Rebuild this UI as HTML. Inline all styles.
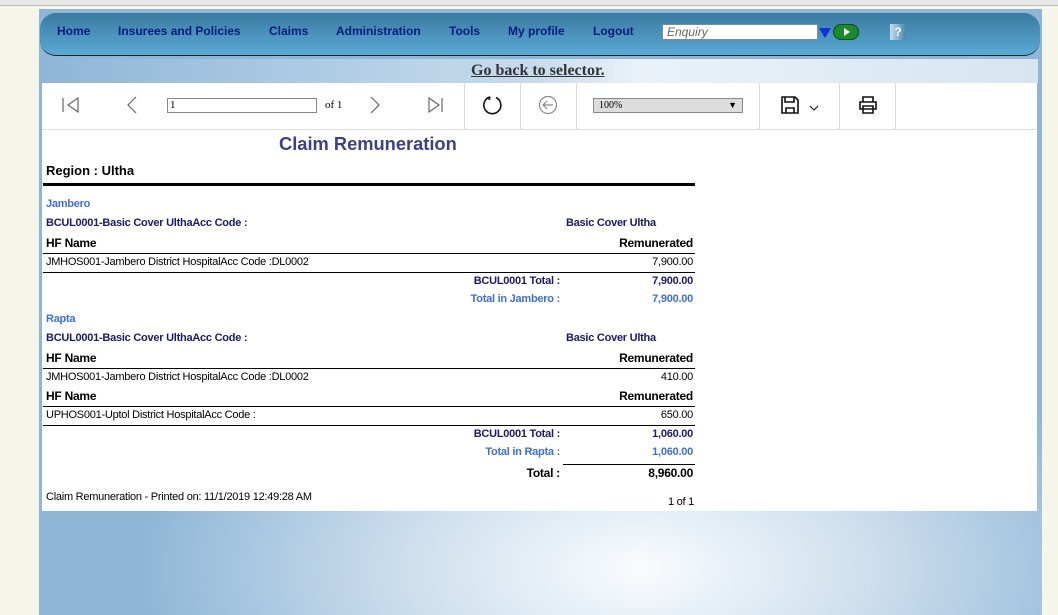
<!DOCTYPE html>
<html><head><meta charset="utf-8"><style>
*{margin:0;padding:0;box-sizing:border-box}
body{width:1058px;height:615px;overflow:hidden;background:#f5f5e9;font-family:"Liberation Sans",sans-serif;position:relative}
.a{position:absolute;white-space:nowrap}
#topbar{left:0;top:0;width:1058px;height:6px;background:#e8e8e8;border-bottom:1px solid #bbb}
#main{left:39px;top:9px;width:1003px;height:606px;background:radial-gradient(ellipse 500px 260px at 600px 560px,#fafcfe 0%,#cfe0ee 45%,#8fb6d6 100%)}
#nav{left:40px;top:13px;width:1000px;height:43px;border-radius:16px;background:linear-gradient(#3a7aa0,#5aaad6);border-bottom:1px solid #222}
.nv{font-size:12px;font-weight:bold;color:#0a1a80;top:24px}
#band{left:40px;top:59px;width:998px;height:24px;background:linear-gradient(90deg,#8fb6d7,#c7dced 50%,#eaf2f8 60%,#d6e5f0)}
#rep{left:42px;top:83px;width:995px;height:428px;background:#fff}
.tb{top:83px;height:46px;border-right:1px solid #ddd}
.t{font-size:11px;color:#000;letter-spacing:-0.25px}
.b{font-weight:bold}
.nb{color:#1a1a6e}
.lb{color:#3b6ee0}
.hl{position:absolute;left:43px;width:652px;height:1px;background:#000}
</style></head><body>
<div class="a" id="topbar"></div>
<div class="a" id="main"></div>
<div class="a" id="nav"></div>
<div class="a nv" style="left:57px">Home</div>
<div class="a nv" style="left:118px">Insurees and Policies</div>
<div class="a nv" style="left:269px">Claims</div>
<div class="a nv" style="left:336px">Administration</div>
<div class="a nv" style="left:449px">Tools</div>
<div class="a nv" style="left:508px">My profile</div>
<div class="a nv" style="left:593px">Logout</div>
<div class="a" style="left:662px;top:24px;width:156px;height:16px;background:#fff;border:1px solid #888;font-size:12px;font-style:italic;color:#666;padding-left:4px;line-height:14px">Enquiry</div>
<div class="a" style="left:819px;top:28px;width:0;height:0;border-left:6px solid transparent;border-right:6px solid transparent;border-top:10px solid #1030e0"></div>
<div class="a" style="left:833px;top:24px;width:26px;height:16px;border-radius:8px;background:#1a8a2a;border:1px solid #0a4a10"><div style="position:absolute;left:10px;top:3px;border-top:4px solid transparent;border-bottom:4px solid transparent;border-left:6px solid #fff"></div></div>
<div class="a" style="left:890px;top:24px;width:16px;height:16px;background:linear-gradient(90deg,#cde,#48a);color:#fff;font-size:12px;font-weight:bold;text-align:center;line-height:16px">?</div>
<div class="a" id="band"></div>
<div class="a" style="left:471px;top:62px;font-family:'Liberation Serif',serif;font-size:16px;font-weight:bold;color:#333;text-decoration:underline">Go back to selector.</div>
<div class="a" id="rep"></div>
<div class="a" style="left:42px;top:129px;width:995px;height:1px;background:#ddd"></div>
<div class="a tb" style="left:42px;width:423px"></div>
<div class="a tb" style="left:465px;width:56px"></div>
<div class="a tb" style="left:521px;width:56px"></div>
<div class="a tb" style="left:577px;width:183px"></div>
<div class="a tb" style="left:760px;width:80px"></div>
<div class="a tb" style="left:840px;width:56px"></div>
<svg class="a" style="left:60px;top:95px" width="400" height="20" fill="none" stroke="#666" stroke-width="1.2">
<path d="M3 3v14M18 3l-10 7 10 7z"/>
<path d="M76 2l-8 8 8 8"/>
<path d="M311 2l8 8-8 8"/>
<path d="M369 3l10 7-10 7zM382 3v14"/>
</svg>
<div class="a" style="left:167px;top:98px;width:150px;height:15px;border:1px solid #888;font-family:'Liberation Serif',serif;font-size:11px;padding-left:2px;line-height:13px">1</div>
<div class="a" style="left:325px;top:99px;font-family:'Liberation Serif',serif;font-size:11px">of 1</div>
<svg class="a" style="left:482px;top:94px" width="22" height="22" fill="none" stroke="#111" stroke-width="1.6"><path d="M8 3A8.5 8.5 0 1 0 14 3.5"/><path d="M8 3l-3 1M8 3l-1 3"/></svg>
<svg class="a" style="left:538px;top:95px" width="22" height="20" fill="none" stroke="#888" stroke-width="1.2"><circle cx="10" cy="10" r="8.5"/><path d="M15 10H5M9 6l-4 4 4 4"/></svg>
<div class="a" style="left:593px;top:98px;width:150px;height:15px;border:1px solid #888;background:#ddd;font-family:'Liberation Serif',serif;font-size:10px;padding-left:5px;line-height:13px">100%<span style="position:absolute;right:5px;font-size:9px">▼</span></div>
<svg class="a" style="left:780px;top:95px" width="40" height="20" fill="none" stroke="#111" stroke-width="1.6"><path d="M2 2h13l3 3v13H2z"/><path d="M5 2v5h9V2M6 18v-5h8v5"/><path d="M30 11l4 4 4-4" stroke-width="1"/></svg>
<svg class="a" style="left:858px;top:95px" width="20" height="20" fill="none" stroke="#111" stroke-width="1.6"><path d="M5 7V2h10v5M2 7h16v7H2zM5 11h10v7H5z"/></svg>
<div class="a" style="left:279px;top:133px;font-size:18.3px;font-weight:bold;color:#3e3e8e">Claim Remuneration</div>
<div class="a t b" style="left:46px;top:163px;font-size:13px;letter-spacing:0">Region : Ultha</div>
<div class="hl" style="top:183px;height:3px"></div>
<div class="a t b lb" style="left:46px;top:198px">Jambero</div>
<div class="a t b nb" style="left:46px;top:217px">BCUL0001-Basic Cover UlthaAcc Code :</div>
<div class="a t b nb" style="left:566px;top:217px">Basic Cover Ultha</div>
<div class="a t b" style="left:46px;top:236px;font-size:12px">HF Name</div>
<div class="a t b" style="right:365px;top:236px;font-size:12px">Remunerated</div>
<div class="hl" style="top:253px"></div>
<div class="a t" style="left:46px;top:256px">JMHOS001-Jambero District HospitalAcc Code :DL0002</div>
<div class="a t" style="right:365px;top:256px">7,900.00</div>
<div class="hl" style="top:272px"></div>
<div class="a t b nb" style="right:498px;top:275px">BCUL0001 Total :</div>
<div class="a t b nb" style="right:365px;top:275px">7,900.00</div>
<div class="a t b lb" style="right:498px;top:293px">Total in Jambero :</div>
<div class="a t b lb" style="right:365px;top:293px">7,900.00</div>
<div class="a t b lb" style="left:46px;top:313px">Rapta</div>
<div class="a t b nb" style="left:46px;top:332px">BCUL0001-Basic Cover UlthaAcc Code :</div>
<div class="a t b nb" style="left:566px;top:332px">Basic Cover Ultha</div>
<div class="a t b" style="left:46px;top:351px;font-size:12px">HF Name</div>
<div class="a t b" style="right:365px;top:351px;font-size:12px">Remunerated</div>
<div class="hl" style="top:368px"></div>
<div class="a t" style="left:46px;top:371px">JMHOS001-Jambero District HospitalAcc Code :DL0002</div>
<div class="a t" style="right:365px;top:371px">410.00</div>
<div class="a t b" style="left:46px;top:389px;font-size:12px">HF Name</div>
<div class="a t b" style="right:365px;top:389px;font-size:12px">Remunerated</div>
<div class="hl" style="top:406px"></div>
<div class="a t" style="left:46px;top:409px">UPHOS001-Uptol District HospitalAcc Code :</div>
<div class="a t" style="right:365px;top:409px">650.00</div>
<div class="hl" style="top:425px"></div>
<div class="a t b nb" style="right:498px;top:428px">BCUL0001 Total :</div>
<div class="a t b nb" style="right:365px;top:428px">1,060.00</div>
<div class="a t b lb" style="right:498px;top:446px">Total in Rapta :</div>
<div class="a t b lb" style="right:365px;top:446px">1,060.00</div>
<div class="a" style="left:563px;top:464px;width:132px;height:1px;background:#000"></div>
<div class="a t b" style="right:498px;top:466px;font-size:12px">Total :</div>
<div class="a t b" style="right:365px;top:466px;font-size:12px">8,960.00</div>
<div class="a t" style="left:46px;top:491px">Claim Remuneration - Printed on: 11/1/2019 12:49:28 AM</div>
<div class="a t" style="right:364px;top:496px">1 of 1</div>
</body></html>
